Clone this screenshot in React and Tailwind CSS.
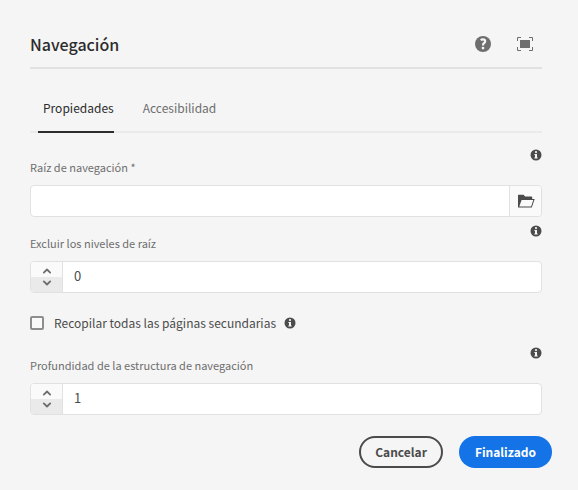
import { useState } from "react";

function InfoIcon() {
  return (
    <svg viewBox="0 0 12 12" className="block size-3 shrink-0" aria-hidden="true">
      <circle cx="6" cy="6" r="5.500" fill="#4b4b4b" />
      <circle cx="6" cy="3.100" r="1.100" fill="#f5f5f5" />
      <path d="M4.400 5H7v3.500h.7v1H4.300v-1H5V6h-.6z" fill="#f5f5f5" />
    </svg>
  );
}

function HelpIcon() {
  return (
    <svg viewBox="0 0 16 16" className="block size-4" aria-hidden="true">
      <circle cx="8" cy="8" r="8" fill="#6e6e6e" />
      <path
        d="M5.700 4.100C6.300 3.600 7 3.400 7.900 3.400c1.400 0 2.300.7 2.300 1.800 0 .9-.5 1.400-1.200 2-.7.500-.9.800-.9 1.500v.7"
        fill="none"
        stroke="#f5f5f5"
        strokeWidth="2.200"
      />
      <circle cx="8" cy="12.100" r="1.400" fill="#f5f5f5" />
    </svg>
  );
}

function FullScreenIcon() {
  return (
    <svg viewBox="0 0 16 14" className="block h-3.5 w-4" aria-hidden="true">
      <rect x="3" y="3" width="10" height="8" fill="#6e6e6e" />
      <path
        d="M.5 4V.5H4M12 .5h3.500V4M15.500 10v3.500H12M4 13.500H.5V10"
        fill="none"
        stroke="#6e6e6e"
      />
    </svg>
  );
}

function FolderOpenIcon() {
  return (
    <svg viewBox="0 0 18 14" className="block h-3.5 w-[18px]" aria-hidden="true">
      <path
        d="M1 13.500V1.400C1 1 1.200.700 1.600.700h4.900l1.600 1.800h6.500c.4 0 .6.200.6.600v1.900h2.500l-2.900 8.500z"
        fill="#4b4b4b"
      />
      <path d="M4.600 6h11.700l-2.200 6.400H2.300z" fill="#fafafa" />
    </svg>
  );
}

function Chevron({ up }) {
  return (
    <svg viewBox="0 0 10 6" className="block h-1.5 w-2.5" aria-hidden="true">
      <path
        d={up ? "M1.800 4.600 5 1.500l3.200 3.100" : "M1.800 1.400 5 4.500l3.200-3.100"}
        fill="none"
        stroke="#6e6e6e"
        strokeWidth="1.800"
        strokeLinecap="round"
        strokeLinejoin="round"
      />
    </svg>
  );
}

function Field({ id, label, children }) {
  return (
    <div>
      <div className="flex items-start justify-between">
        <label htmlFor={id} className="pt-2 pb-2 text-[11px] leading-5 text-[#6e6e6e]">
          {label}
        </label>
        <InfoIcon />
      </div>
      <div className="flex h-8 overflow-hidden rounded border border-[#e1e1e1] bg-white">
        {children}
      </div>
    </div>
  );
}

function NumberField({ id, label, initial }) {
  const [value, setValue] = useState(initial);
  return (
    <Field id={id} label={label}>
      <div className="flex w-8 shrink-0 flex-col border-r border-[#e1e1e1]">
        <button
          type="button"
          aria-label="Incrementar"
          onClick={() => setValue(value + 1)}
          className="flex flex-1 items-end justify-center bg-[#fafafa] pb-[3px]"
        >
          <Chevron up />
        </button>
        <button
          type="button"
          aria-label="Reducir"
          onClick={() => setValue(Math.max(0, value - 1))}
          className="flex flex-1 items-start justify-center bg-[#eaeaea] pt-[3px]"
        >
          <Chevron />
        </button>
      </div>
      <input
        id={id}
        type="text"
        inputMode="numeric"
        value={value}
        onChange={(e) => setValue(Number(e.target.value) || 0)}
        className="min-w-0 flex-1 px-[11px] pb-0.5 text-[13px] text-[#4b4b4b] outline-none"
      />
    </Field>
  );
}

export default function App() {
  return (
    <div className="min-h-screen bg-[#f5f5f5] pt-5 pr-[26px] pb-5 pl-[30px] font-['Noto_Sans_CJK_SC','Noto_Sans',sans-serif]">
      <div className="pr-2.5">
        <header className="flex h-[49px] items-center justify-between border-b-2 border-[#e1e1e1]">
          <h1 className="text-[16px] leading-6 font-medium text-[#2c2c2c]">Navegación</h1>
          <div className="flex items-center gap-[26px] pr-[9px]">
            <button type="button" aria-label="Ayuda">
              <HelpIcon />
            </button>
            <button type="button" aria-label="Pantalla completa">
              <FullScreenIcon />
            </button>
          </div>
        </header>

        <div role="tablist" className="mt-4 flex gap-6 border-b-2 border-[#eaeaea] pl-2">
          <button
            type="button"
            role="tab"
            aria-selected="true"
            className="-mb-0.5 h-12 border-b-2 border-[#2c2c2c] pl-[5px] text-[12px] text-[#2c2c2c]"
          >
            Propiedades
          </button>
          <button
            type="button"
            role="tab"
            aria-selected="false"
            className="-mb-0.5 h-12 border-b-2 border-transparent pl-[5px] text-[12px] text-[#6e6e6e]"
          >
            Accesibilidad
          </button>
        </div>

        <form id="nav-form" className="flex flex-col gap-2 pt-4" onSubmit={(e) => e.preventDefault()}>
          <Field id="root" label="Raíz de navegación *">
            <input
              id="root"
              type="text"
              className="min-w-0 flex-1 px-[11px] pb-0.5 text-[13px] text-[#4b4b4b] outline-none"
            />
            <button
              type="button"
              aria-label="Abrir selección"
              className="flex w-8 shrink-0 items-center justify-center border-l border-[#e1e1e1] bg-[#fafafa]"
            >
              <FolderOpenIcon />
            </button>
          </Field>
          <NumberField id="exclude" label="Excluir los niveles de raíz" initial={0} />
          <div className="flex items-center gap-2 pt-1.5">
            <label className="flex h-8 items-center gap-2.5 text-[12px] text-[#4b4b4b]">
              <input
                type="checkbox"
                className="size-3.5 appearance-none rounded-[2px] border-2 border-[#8e8e8e] bg-[#fafafa] checked:bg-[#8e8e8e]"
              />
              Recopilar todas las páginas secundarias
            </label>
            <InfoIcon />
          </div>
          <NumberField id="depth" label="Profundidad de la estructura de navegación" initial={1} />
        </form>
      </div>

      <footer className="mt-[21px] flex justify-end gap-4">
        <button
          type="button"
          className="h-8 rounded-full border-2 border-[#4b4b4b] px-3.5 text-[12px] font-bold text-[#4b4b4b]"
        >
          Cancelar
        </button>
        <button
          type="submit"
          form="nav-form"
          className="h-8 rounded-full bg-[#1473e6] px-4 text-[12px] font-bold text-white"
        >
          Finalizado
        </button>
      </footer>
    </div>
  );
}
